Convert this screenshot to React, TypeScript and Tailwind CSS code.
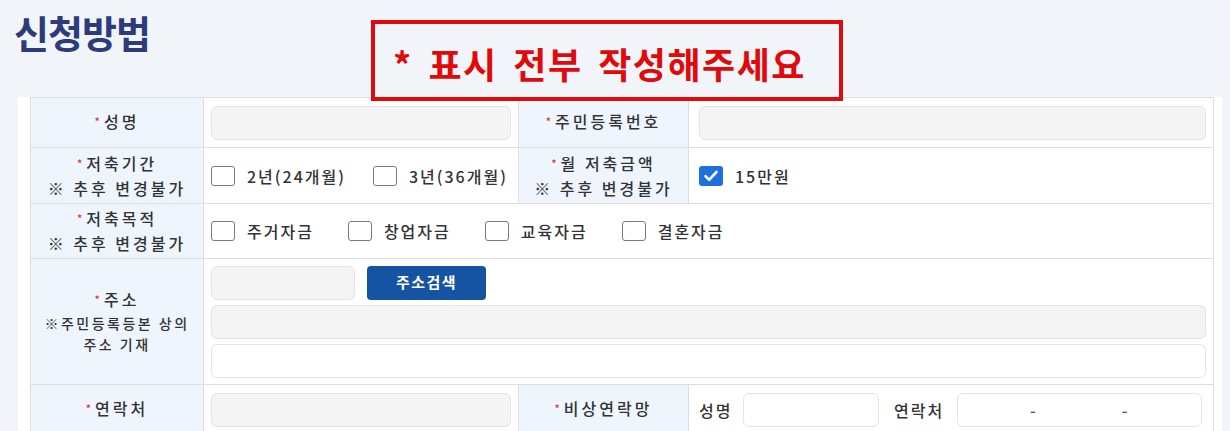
import React from "react";

const FONT = "font-['Noto_Sans_CJK_KR','Noto_Sans',sans-serif]";

function Req() {
  return <span className="relative -top-[2px] mr-[1px] text-[11px] text-[#d9342b]">*</span>;
}

function Box({ checked = false }: { checked?: boolean }) {
  if (checked)
    return (
      <span className="flex h-[20px] w-[24px] shrink-0 items-center justify-center rounded-[3px] bg-[#1e6fe0]">
        <svg width="16" height="14" viewBox="0 0 16 14" fill="none">
          <path d="M2.5 7.2l3.6 3.6L13.5 3" stroke="white" strokeWidth="2.6" strokeLinecap="round" strokeLinejoin="round" />
        </svg>
      </span>
    );
  return <span className="h-[20px] w-[24px] shrink-0 rounded-[3px] border-[1.5px] border-[#7a7a7a] bg-white" />;
}

function Option({ label, checked, gap = "mr-[34px]" }: { label: string; checked?: boolean; gap?: string }) {
  return (
    <label className={`flex items-center ${gap}`}>
      <Box checked={checked} />
      <span className="ml-[12px]">{label}</span>
    </label>
  );
}

const labelCell = "border border-[#dedede] bg-[#eef5fd] text-center align-middle text-[16px] leading-[23px] font-medium tracking-[3px] text-[#333]";
const valueCell = "border border-[#dedede] bg-white px-[7px] align-middle text-[16px] font-medium tracking-[2px] text-[#333]";
const grayInput = "h-[34px] rounded-[6px] border border-[#e4e4e4] bg-[#f4f4f4]";
const whiteInput = "h-[34px] rounded-[6px] border border-[#e4e4e4] bg-white";

export default function App() {
  return (
    <div className={`relative h-[431px] w-[1230px] overflow-hidden bg-[#f1f4f9] ${FONT}`}>
      <h2 className="pl-[14px] pt-[11px] text-[38px] leading-[41px] font-bold tracking-[-1px] text-[#2d3b7c]">신청방법</h2>

      <div className="absolute left-[371px] top-[20px] z-10 flex h-[81px] w-[472px] items-center border-[4px] border-[#e00a0a] pl-[18px] pt-[4px] text-[36px] font-bold tracking-[1.5px] [word-spacing:6px] text-[#e00a0a]">
        * 표시 전부 작성해주세요
      </div>

      <div className="ml-[18px] mt-[45px] w-[1204px] bg-white pl-[12px] pr-[9px]">
        <table className="w-[1183px] table-fixed border-collapse">
          <colgroup>
            <col className="w-[173px]" />
            <col className="w-[315px]" />
            <col className="w-[170px]" />
            <col className="w-[525px]" />
          </colgroup>
          <tbody>
            <tr className="h-[50px]">
              <td className={labelCell}><Req />성명</td>
              <td className={valueCell}><div className={grayInput} /></td>
              <td className={labelCell}><Req />주민등록번호</td>
              <td className={valueCell}><div className={`${grayInput} ml-[3px]`} /></td>
            </tr>
            <tr className="h-[56px]">
              <td className={labelCell}>
                <div><Req />저축기간</div>
                <div>※ 추후 변경불가</div>
              </td>
              <td className={valueCell}>
                <div className="flex items-center">
                  <Option label="2년(24개월)" gap="mr-[27px]" />
                  <Option label="3년(36개월)" gap="" />
                </div>
              </td>
              <td className={labelCell}>
                <div><Req />월 저축금액</div>
                <div>※ 추후 변경불가</div>
              </td>
              <td className={valueCell}>
                <div className="ml-[3px] flex items-center">
                  <Option label="15만원" checked />
                </div>
              </td>
            </tr>
            <tr className="h-[55px]">
              <td className={labelCell}>
                <div><Req />저축목적</div>
                <div>※ 추후 변경불가</div>
              </td>
              <td className={valueCell} colSpan={3}>
                <div className="flex items-center">
                  <Option label="주거자금" />
                  <Option label="창업자금" />
                  <Option label="교육자금" />
                  <Option label="결혼자금" />
                </div>
              </td>
            </tr>
            <tr className="h-[126px]">
              <td className={labelCell}>
                <div><Req />주소</div>
                <div className="text-[14px] leading-[21px] tracking-[2.5px]">※주민등록등본 상의</div>
                <div className="text-[14px] leading-[21px] tracking-[2.5px]">주소 기재</div>
              </td>
              <td className={valueCell} colSpan={3}>
                <div className="flex flex-col gap-[5px]">
                  <div className="flex items-center gap-[12px]">
                    <div className={`${grayInput} w-[144px]`} />
                    <button className="h-[34px] w-[119px] rounded-[4px] bg-[#1553a3] text-[15px] font-bold tracking-[1.5px] text-white">
                      주소검색
                    </button>
                  </div>
                  <div className={grayInput} />
                  <div className={whiteInput} />
                </div>
              </td>
            </tr>
            <tr className="h-[50px]">
              <td className={labelCell}><Req />연락처</td>
              <td className={valueCell}><div className={grayInput} /></td>
              <td className={labelCell}><Req />비상연락망</td>
              <td className={valueCell}>
                <div className="flex items-center pl-[3px]">
                  <span className="w-[36px]">성명</span>
                  <div className={`${whiteInput} ml-[8px] w-[136px]`} />
                  <span className="ml-[15px] w-[52px]">연락처</span>
                  <div className={`${whiteInput} ml-[11px] flex w-[245px] items-center text-[#555]`}>
                    <span className="ml-[72px]">-</span>
                    <span className="ml-[84px]">-</span>
                  </div>
                </div>
              </td>
            </tr>
          </tbody>
        </table>
      </div>
    </div>
  );
}
